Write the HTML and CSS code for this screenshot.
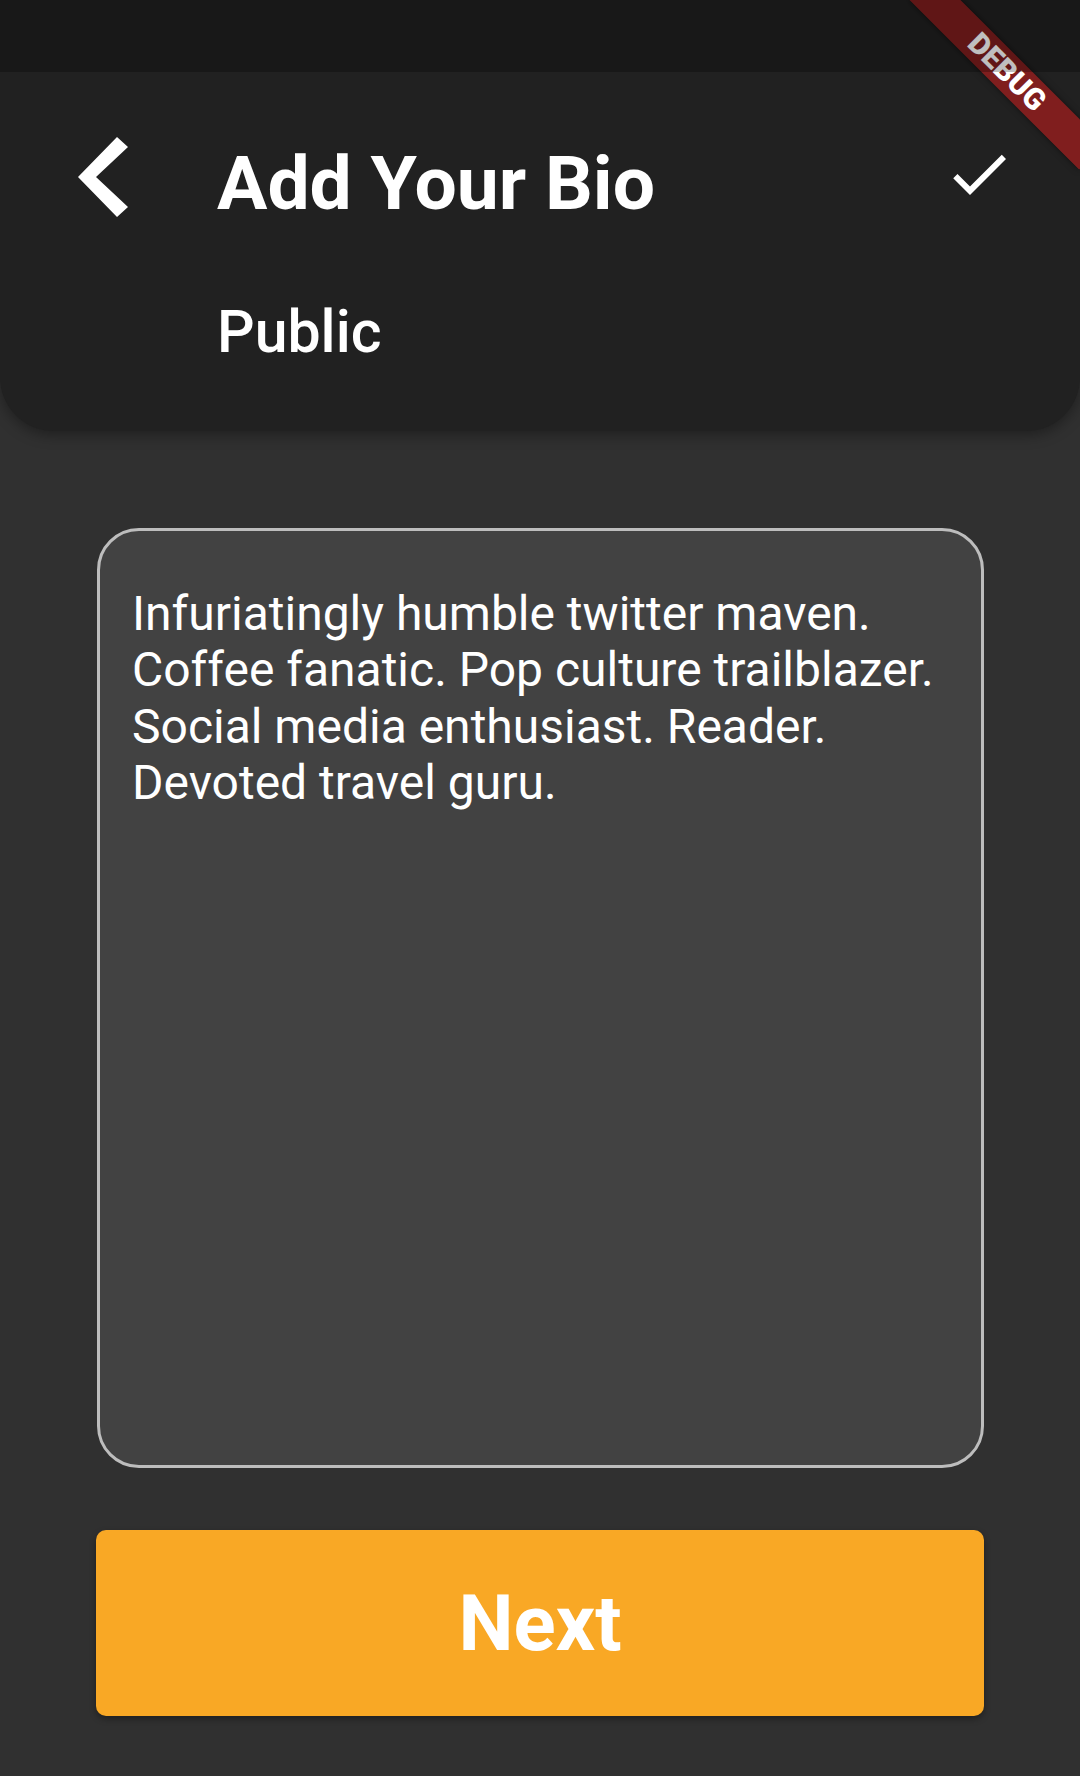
FILE: index.html
```html
<!DOCTYPE html>
<html lang="en">
<head>
  <meta charset="UTF-8">
  <meta name="viewport" content="width=device-width, initial-scale=1.0">
  <title>Add Your Bio</title>
  <link rel="stylesheet" href="styles.css">
</head>
<body>
  <div class="app">
    <!-- Barra superior -->
    <div class="appbar">
      <div class="toolbar">
        <svg class="back" viewBox="0 0 50 80">
          <path d="M39 0L50 10 18 40 50 70 39 80 0 40z" fill="#fff"/>
        </svg>
        <div class="titles">
          <h1 class="title">Add Your Bio</h1>
          <h2 class="subtitle">Public</h2>
        </div>
        <svg class="check" viewBox="0 0 24 24">
          <path d="M9 16.17L4.83 12l-1.42 1.41L9 19 21 7l-1.41-1.41z" fill="#fff"/>
        </svg>
      </div>
    </div>

    <!-- Campo de texto -->
    <div class="bio-box">
      Infuriatingly humble twitter maven.<br>
      Coffee fanatic. Pop culture trailblazer.<br>
      Social media enthusiast. Reader.<br>
      Devoted travel guru.
    </div>

    <button class="next">Next</button>

    <!-- Barra de estado y banner -->
    <div class="debug-banner">DEBUG</div>
    <div class="status-bar"></div>
  </div>
</body>
</html>
```

FILE: styles.css
```css
/* General */
body {
  margin: 0;
  padding: 0;
  background: #303030;
  font-family: Roboto, "Noto Sans", sans-serif;
  color: #fff;
}

.app {
  position: relative;
  width: 1080px;
  height: 1776px;
  overflow: hidden;
  background: #303030;
}

/* Barra superior */
.appbar {
  height: 431px;
  box-sizing: border-box;
  padding-top: 72px;
  background: #212121;
  border-bottom-left-radius: 54px;
  border-bottom-right-radius: 54px;
  box-shadow: 0 4px 14px rgba(0, 0, 0, 0.35);
}

.toolbar {
  display: flex;
  align-items: flex-start;
}

.back {
  width: 50px;
  height: 80px;
  margin: 65px 0 0 78px;
}

.titles {
  margin-left: 89px;
}

.title {
  margin: 66px 0 0;
  font-size: 75px;
  line-height: 90px;
  font-weight: 700;
}

.subtitle {
  margin: 69px 0 0;
  font-size: 59px;
  line-height: 70px;
  font-weight: 500;
}

.check {
  width: 72px;
  height: 72px;
  margin: 66px 65px 0 auto;
}

/* Caja de bio */
.bio-box {
  margin: 97px 96px 0 97px;
  height: 940px;
  box-sizing: border-box;
  padding: 55px 30px 0 32px;
  background: #424242;
  border: 3px solid #bdbdbd;
  border-radius: 42px;
  font-size: 48px;
  line-height: 56.3px;
  white-space: nowrap;
}

/* Boton */
.next {
  display: flex;
  justify-content: center;
  align-items: center;
  width: 888px;
  height: 186px;
  margin: 62px 0 0 96px;
  padding: 0;
  border: none;
  border-radius: 10px;
  background: #f9a825;
  color: #fff;
  font-family: Roboto, "Noto Sans", sans-serif;
  font-size: 78px;
  font-weight: 700;
  box-shadow: 0 3px 6px rgba(0, 0, 0, 0.35);
}

/* Banner debug */
.debug-banner {
  position: absolute;
  top: 54px;
  left: 887px;
  width: 240px;
  height: 36px;
  line-height: 36px;
  text-align: center;
  background: rgba(183, 28, 28, 0.63);
  box-shadow: 0 0 6px rgba(0, 0, 0, 0.5);
  transform: rotate(45deg);
  font-size: 30px;
  font-weight: 900;
  color: #fff;
}

.status-bar {
  position: absolute;
  top: 0;
  left: 0;
  right: 0;
  height: 72px;
  background: rgba(0, 0, 0, 0.25);
}
```
